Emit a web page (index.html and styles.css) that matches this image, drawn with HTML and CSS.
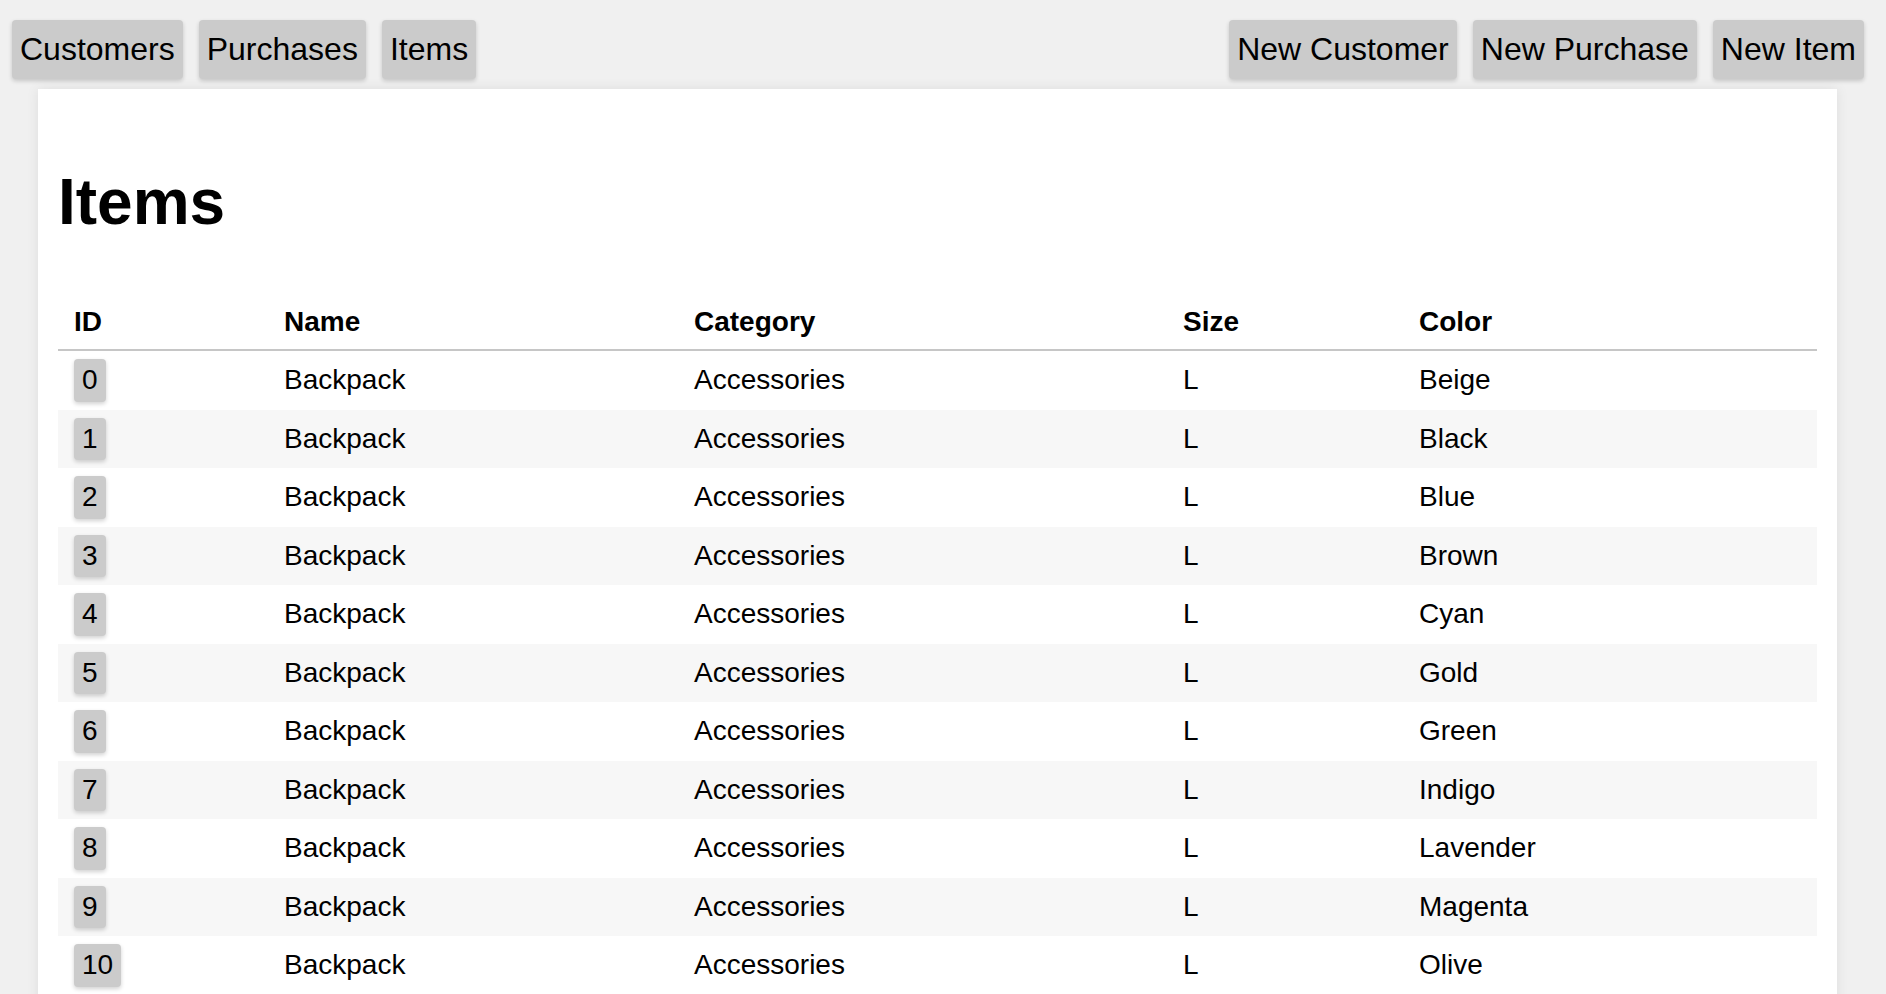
FILE: index.html
```html
<!DOCTYPE html>
<html>
<head>
<meta charset="utf-8">
<title>Items</title>
<link rel="stylesheet" href="styles.css">
</head>
<body>
<nav class="topbar">
  <div class="group">
    <button class="btn">Customers</button>
    <button class="btn">Purchases</button>
    <button class="btn">Items</button>
  </div>
  <div class="group">
    <button class="btn">New Customer</button>
    <button class="btn">New Purchase</button>
    <button class="btn">New Item</button>
  </div>
</nav>
<main class="card">
  <h1 class="title">Items</h1>
  <table class="grid">
    <thead>
      <tr>
        <th class="c-id">ID</th>
        <th class="c-name">Name</th>
        <th class="c-cat">Category</th>
        <th class="c-size">Size</th>
        <th class="c-color">Color</th>
      </tr>
    </thead>
    <tbody>
      <tr><td><span class="badge">0</span></td><td>Backpack</td><td>Accessories</td><td>L</td><td>Beige</td></tr>
      <tr><td><span class="badge">1</span></td><td>Backpack</td><td>Accessories</td><td>L</td><td>Black</td></tr>
      <tr><td><span class="badge">2</span></td><td>Backpack</td><td>Accessories</td><td>L</td><td>Blue</td></tr>
      <tr><td><span class="badge">3</span></td><td>Backpack</td><td>Accessories</td><td>L</td><td>Brown</td></tr>
      <tr><td><span class="badge">4</span></td><td>Backpack</td><td>Accessories</td><td>L</td><td>Cyan</td></tr>
      <tr><td><span class="badge">5</span></td><td>Backpack</td><td>Accessories</td><td>L</td><td>Gold</td></tr>
      <tr><td><span class="badge">6</span></td><td>Backpack</td><td>Accessories</td><td>L</td><td>Green</td></tr>
      <tr><td><span class="badge">7</span></td><td>Backpack</td><td>Accessories</td><td>L</td><td>Indigo</td></tr>
      <tr><td><span class="badge">8</span></td><td>Backpack</td><td>Accessories</td><td>L</td><td>Lavender</td></tr>
      <tr><td><span class="badge">9</span></td><td>Backpack</td><td>Accessories</td><td>L</td><td>Magenta</td></tr>
      <tr><td><span class="badge">10</span></td><td>Backpack</td><td>Accessories</td><td>L</td><td>Olive</td></tr>
      <tr><td><span class="badge">11</span></td><td>Backpack</td><td>Accessories</td><td>L</td><td>Orange</td></tr>
      <tr><td><span class="badge">12</span></td><td>Backpack</td><td>Accessories</td><td>L</td><td>Pink</td></tr>
    </tbody>
  </table>
</main>
</body>
</html>
```
FILE: styles.css
```css
html, body {
  margin: 0;
  padding: 0;
}
body {
  background: #f0f0f0;
  font-family: "Liberation Sans", Arial, sans-serif;
  color: #000;
}
.topbar {
  display: flex;
  justify-content: space-between;
  align-items: center;
  padding: 20px 22px 0 12px;
}
.group {
  display: flex;
  gap: 16px;
}
.btn {
  font-family: "Liberation Sans", Arial, sans-serif;
  font-size: 32px;
  line-height: 37px;
  color: #000;
  background: #cbcbcb;
  border: none;
  border-radius: 4px;
  padding: 11px 8px;
  margin: 0;
  box-shadow: 0 2px 4px rgba(0, 0, 0, 0.18);
}
.card {
  background: #fff;
  margin: 10px 49px 0 38px;
  padding: 20px;
  box-shadow: 0 0 12px rgba(0, 0, 0, 0.08);
}
.title {
  font-size: 64px;
  font-weight: bold;
  line-height: 74px;
  margin: 56px 0 55px 0;
}
.grid {
  width: 100%;
  table-layout: fixed;
  border-collapse: collapse;
  font-size: 28px;
}
.grid th {
  box-sizing: border-box;
  text-align: left;
  font-weight: bold;
  padding: 12px 16px 11px 16px;
  line-height: 32px;
  border-bottom: 2px solid #c6c6c6;
}
.c-id { width: 210px; }
.c-name { width: 410px; }
.c-cat { width: 489px; }
.c-size { width: 236px; }
.c-color { width: auto; }
.grid td {
  padding: 8px 16px;
  line-height: 32px;
  vertical-align: middle;
}
.grid tbody tr:nth-child(even) {
  background: #f7f7f7;
}
.badge {
  display: inline-block;
  background: #cbcbcb;
  border-radius: 4px;
  padding: 5.25px 8px;
  line-height: 32px;
  box-shadow: 0 2px 4px rgba(0, 0, 0, 0.18);
}
```
